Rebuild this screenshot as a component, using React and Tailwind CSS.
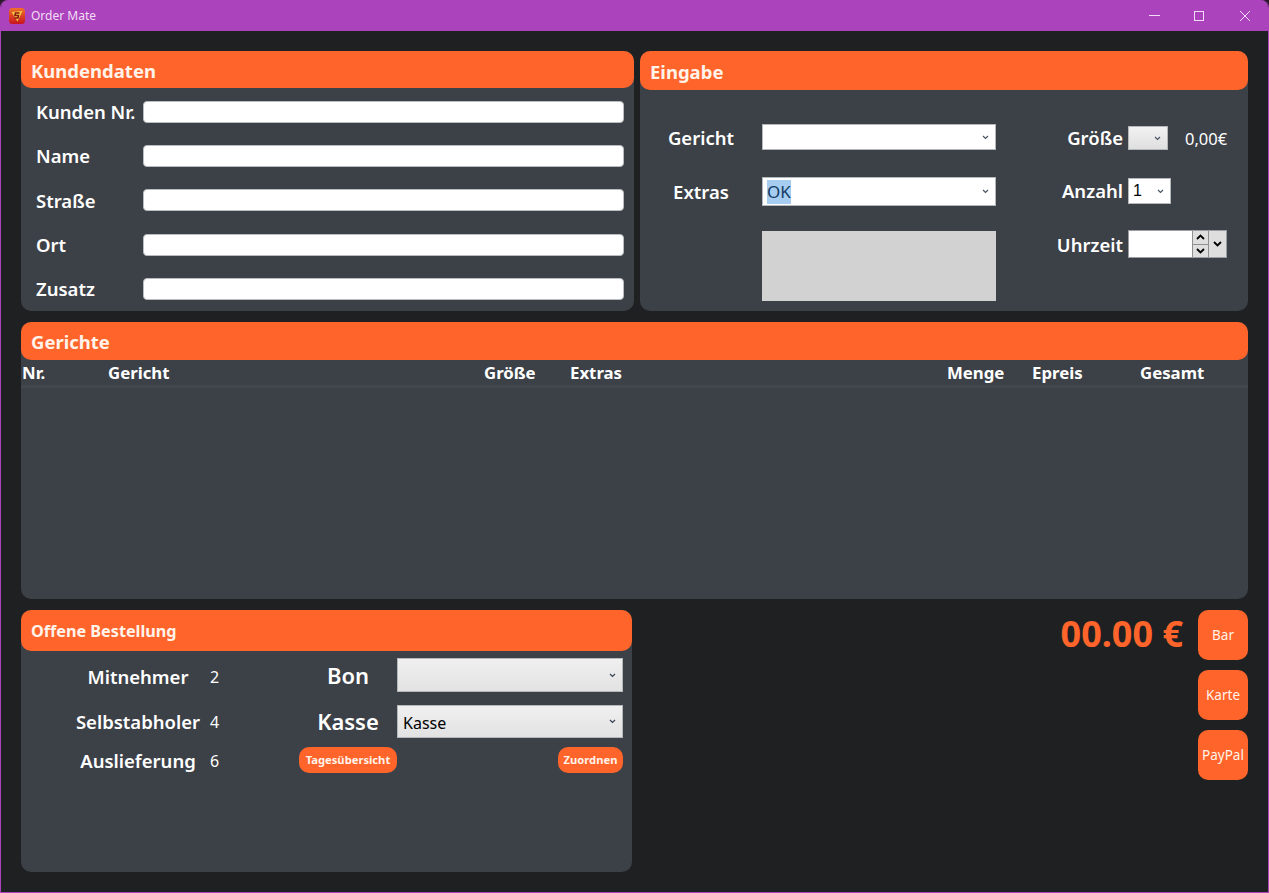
import React from 'react';

const FONT = "font-['Noto_Sans','Open_Sans',sans-serif]";

function Chevron({ className = 'text-gray-600' }) {
  return (
    <svg width="7" height="5" viewBox="0 0 7 5" className={className}>
      <path d="M1 1l2.5 2.5L6 1" fill="none" stroke="currentColor" strokeWidth="1.2" />
    </svg>
  );
}

function Logo() {
  return (
    <svg width="16" height="16" viewBox="0 0 16 16">
      <defs>
        <linearGradient id="lg" x1="0" y1="0" x2="0" y2="1">
          <stop offset="0" stopColor="#f0702a" />
          <stop offset="1" stopColor="#c8151f" />
        </linearGradient>
      </defs>
      <rect width="16" height="16" rx="3.5" fill="url(#lg)" />
      <path d="M2.5 4L13.5 3L8.5 13.5Z" fill="#f6c744" />
      <path d="M10.5 5H6.5L6 7.5H9.5L9 10H5.5" fill="none" stroke="#8c1a12" strokeWidth="1.6" />
    </svg>
  );
}

function PanelHeader({ title, className = 'text-[18.5px]' }) {
  return (
    <div className={`flex items-center rounded-[10px] bg-[#ff642b] pl-[10px] pt-[2px] font-bold text-[#fff3ea] ${className}`}>
      {title}
    </div>
  );
}

function Field({ label }) {
  return (
    <div className="flex h-[22px] items-center">
      <span className="w-[107px] text-[18.5px] font-semibold text-white whitespace-nowrap">{label}</span>
      <div className="h-[22px] flex-1 rounded-[4px] border border-[#b9bcc0] bg-white" />
    </div>
  );
}

function Kundendaten() {
  return (
    <section className="w-[613px] rounded-[10px] bg-[#3c4047]">
      <PanelHeader title="Kundendaten" className="h-[37px] text-[18.5px]" />
      <div className="flex flex-col gap-[22.2px] pt-[13px] pl-[15px] pr-[10px]">
        {['Kunden Nr.', 'Name', 'Straße', 'Ort', 'Zusatz'].map(l => <Field key={l} label={l} />)}
      </div>
    </section>
  );
}

function Select({ className = '', children, chevron = 'text-gray-600' }) {
  return (
    <div className={`flex items-center justify-between border border-[#b5b8bb] pr-[6px] text-black ${className}`}>
      <div className="flex items-center">{children}</div>
      <Chevron className={chevron} />
    </div>
  );
}

function Eingabe() {
  return (
    <section className="ml-[6px] flex-1 rounded-[10px] bg-[#3c4047]">
      <PanelHeader title="Eingabe" className="h-[39px] text-[18.5px]" />
      <div className="flex pt-[34px]">
        <div className="w-[122px] flex flex-col items-center text-[18.5px] font-semibold text-white">
          <div className="flex h-[28px] items-center">Gericht</div>
          <div className="mt-[25px] flex h-[29px] items-center">Extras</div>
        </div>
        <div className="w-[234px] flex flex-col">
          <Select className="h-[26px] bg-white" />
          <Select className="mt-[27px] h-[29px] bg-white pl-[4px]">
            <span className="bg-[#a6cdf0] text-[17px] leading-[24px] text-[#123a66]">OK</span>
          </Select>
          <div className="mt-[25px] h-[70px] bg-[#d2d2d2]" />
        </div>
        <div className="ml-[61px] w-[66px] flex flex-col items-end text-[18.5px] font-semibold text-white whitespace-nowrap">
          <div className="mt-[2px] flex h-[24px] items-center">Größe</div>
          <div className="mt-[28px] flex h-[26px] items-center">Anzahl</div>
          <div className="mt-[27px] flex h-[28px] items-center">Uhrzeit</div>
        </div>
        <div className="ml-[5px] flex flex-col">
          <div className="mt-[2px] flex h-[24px] items-center">
            <Select className="h-[24px] w-[40px] bg-gradient-to-b from-[#f2f2f2] to-[#dfdfdf]" />
            <span className="ml-[17px] pt-[2px] text-[16.5px] text-white">0,00€</span>
          </div>
          <Select className="mt-[28px] h-[26px] w-[43px] bg-white pl-[4px]">
            <span className="font-['Liberation_Sans'] text-[16px] leading-none">1</span>
          </Select>
          <div className="mt-[26px] flex h-[28px] w-[99px] border border-[#9a9da1]">
            <div className="w-[63px] bg-white" />
            <div className="flex w-[17px] flex-col border-x border-[#8f8f8f] bg-[#dedede]">
              <div className="flex flex-1 items-center justify-center border-b border-[#8f8f8f]">
                <svg width="9" height="6" viewBox="0 0 9 6"><path d="M1 5l3.5-3.5L8 5" fill="none" stroke="#000" strokeWidth="1.8" /></svg>
              </div>
              <div className="flex flex-1 items-center justify-center">
                <svg width="9" height="6" viewBox="0 0 9 6"><path d="M1 1l3.5 3.5L8 1" fill="none" stroke="#000" strokeWidth="1.8" /></svg>
              </div>
            </div>
            <div className="flex flex-1 items-center justify-center bg-[#dedede]">
              <svg width="9" height="6" viewBox="0 0 9 6"><path d="M1 1l3.5 3.5L8 1" fill="none" stroke="#000" strokeWidth="1.8" /></svg>
            </div>
          </div>
        </div>
      </div>
    </section>
  );
}

function Gerichte() {
  const cols = [['Nr.', 86], ['Gericht', 376], ['Größe', 86], ['Extras', 377], ['Menge', 85], ['Epreis', 108], ['Gesamt', 100]];
  return (
    <section className="mt-[11px] h-[277px] rounded-[10px] bg-[#3c4047]">
      <PanelHeader title="Gerichte" className="h-[38px] text-[18.5px]" />
      <div className="flex h-[28px] items-center border-b-[3px] border-[#44474d] pl-[1px] text-[16.8px] font-bold text-white">
        {cols.map(([l, w]) => <div key={l} style={{ width: w }}>{l}</div>)}
      </div>
    </section>
  );
}

function Stat({ label, value, className = '' }) {
  return (
    <div className={`flex items-center pl-[55px] text-[18.5px] font-semibold text-white ${className}`}>
      <span className="flex w-[124px] justify-center whitespace-nowrap">{label}</span>
      <span className="ml-[10px] text-[16px] font-normal">{value}</span>
    </div>
  );
}

function PillButton({ children, className = '' }) {
  return (
    <button className={`flex h-[26px] items-center justify-center rounded-[10px] bg-[#ff642b] text-[11.2px] font-bold text-[#fff3ea] ${className}`}>
      {children}
    </button>
  );
}

function Bestellung() {
  return (
    <section className="h-[262px] w-[611px] rounded-[10px] bg-[#3c4047]">
      <PanelHeader title="Offene Bestellung" className="h-[41px] text-[16.2px]" />
      <div className="flex">
        <div className="flex w-[278px] flex-col pt-[14px]">
          <Stat label="Mitnehmer" value="2" className="h-[24px]" />
          <Stat label="Selbstabholer" value="4" className="mt-[21px] h-[24px]" />
          <Stat label="Auslieferung" value="6" className="mt-[15px] h-[24px]" />
        </div>
        <div className="flex flex-1 flex-col pt-[7px] pr-[9px]">
          <div className="flex items-center">
            <span className="w-[98px] text-center text-[22px] font-semibold text-white">Bon</span>
            <Select className="h-[34px] flex-1 bg-gradient-to-b from-[#f0f0f0] to-[#e2e2e2]" chevron="text-gray-700" />
          </div>
          <div className="mt-[13px] flex items-center">
            <span className="w-[98px] text-center text-[22px] font-semibold text-white">Kasse</span>
            <Select className="h-[33px] flex-1 bg-gradient-to-b from-[#f0f0f0] to-[#e2e2e2] pl-[5px]" chevron="text-gray-700">
              <span className="pt-[2px] text-[16px]">Kasse</span>
            </Select>
          </div>
          <div className="mt-[9px] flex justify-between">
            <PillButton className="w-[98px]">Tagesübersicht</PillButton>
            <PillButton className="w-[65px]">Zuordnen</PillButton>
          </div>
        </div>
      </div>
    </section>
  );
}

function PayButton({ children }) {
  return (
    <button className="flex h-[50px] w-[50px] items-center justify-center rounded-[10px] bg-[#ff642b] text-[13.5px] text-[#fff3ea]">
      {children}
    </button>
  );
}

export default function App() {
  return (
    <div className="h-[893px] w-[1269px] bg-[#2a1a2c]">
      <div className={`flex h-full flex-col overflow-hidden rounded-t-[8px] border-x border-b border-[#ab43bd] bg-[#1e2022] ${FONT}`}>
        {/* title bar */}
        <div className="-mx-px flex h-[31px] shrink-0 items-center bg-[#ab43bd] pl-[9px] text-[12px] text-[#f3dcf6]">
          <Logo />
          <span className="ml-[6px]">Order Mate</span>
          <div className="ml-auto flex items-center text-[#f3dcf6]">
            <svg width="11" height="11" viewBox="0 0 11 11" className="mr-[34px]"><path d="M0 5.5h11" stroke="currentColor" /></svg>
            <svg width="10" height="10" viewBox="0 0 10 10" className="mr-[35px]"><rect x=".5" y=".5" width="9" height="9" fill="none" stroke="currentColor" /></svg>
            <svg width="12" height="12" viewBox="0 0 12 12" className="mr-[18px]"><path d="M1 1l10 10M11 1L1 11" stroke="currentColor" /></svg>
          </div>
        </div>
        <main className="flex flex-1 flex-col pt-[20px] pl-[20px] pr-[20px]">
          <div className="flex h-[260px]">
            <Kundendaten />
            <Eingabe />
          </div>
          <Gerichte />
          <div className="mt-[11px] flex">
            <Bestellung />
            <div className="flex flex-1 justify-end">
              <div className="mr-[15px] text-[36px] font-bold leading-[48px] text-[#ff642b]">00.00 €</div>
              <div className="flex flex-col gap-[10px]">
                <PayButton>Bar</PayButton>
                <PayButton>Karte</PayButton>
                <PayButton>PayPal</PayButton>
              </div>
            </div>
          </div>
        </main>
      </div>
    </div>
  );
}
